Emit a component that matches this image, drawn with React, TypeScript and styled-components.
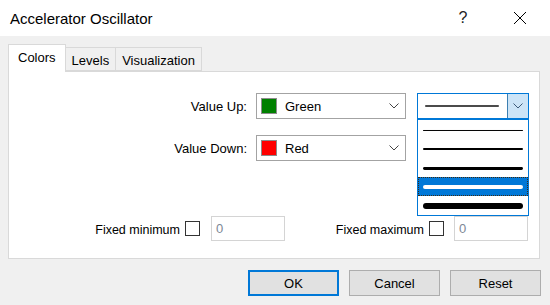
import React from "react";
import styled, { createGlobalStyle } from "styled-components";

const GlobalStyle = createGlobalStyle`
    body {
        margin: 0;
        background: #f0f0f0;
        font-family: "Liberation Sans", Arial, sans-serif;
        font-size: 13px;
        color: #000;
    }
`;

const Window = styled.div`
    width: 550px;
    height: 305px;
    display: flex;
    flex-direction: column;
    background: #f0f0f0;
    overflow: hidden;
`;

const TitleBar = styled.div`
    height: 36px;
    flex-shrink: 0;
    display: flex;
    align-items: center;
    background: #fff;
    padding-left: 10px;
    padding-right: 7px;
`;

const Title = styled.span`
    font-size: 15px;
    flex: 1;
`;

const CaptionButton = styled.div<{ $gap?: number }>`
    width: 46px;
    height: 36px;
    display: flex;
    align-items: center;
    justify-content: center;
    font-size: 16px;
    color: #222;
    margin-left: ${p => p.$gap || 0}px;
`;

const Body = styled.div`
    display: flex;
    flex-direction: column;
    padding: 8px 10px 0 8px;
`;

const TabStrip = styled.div`
    height: 27px;
    display: flex;
    align-items: flex-end;
`;

const Tab = styled.div<{ $active?: boolean }>`
    height: ${p => (p.$active ? 28 : 24)}px;
    box-sizing: border-box;
    padding: ${p => (p.$active ? "0 9px 3px" : "2px 6px 0")};
    display: flex;
    align-items: center;
    border: 1px solid #d9d9d9;
    border-bottom: ${p => (p.$active ? "none" : "1px solid #d9d9d9")};
    border-left: ${p => (p.$active ? "1px solid #d9d9d9" : "none")};
    background: ${p => (p.$active ? "#fff" : "#f0f0f0")};
    margin-bottom: ${p => (p.$active ? -1 : 0)}px;
    position: relative;
    z-index: ${p => (p.$active ? 2 : 1)};
`;

const Panel = styled.div`
    height: 188px;
    box-sizing: border-box;
    border: 1px solid #d9d9d9;
    background: #fff;
    padding-top: 21px;
    display: flex;
    flex-direction: column;
`;

const ValueRows = styled.div`
    display: flex;
    flex-direction: column;
    gap: 16px;
`;

const Row = styled.div`
    display: flex;
    align-items: center;
    height: 26px;
`;

const Label = styled.div`
    width: 238px;
    margin-right: 9px;
    text-align: right;
`;

const ColorCombo = styled.div`
    width: 150px;
    height: 26px;
    box-sizing: border-box;
    border: 1px solid #a3a3a3;
    display: flex;
    align-items: center;
    padding-left: 4px;
    padding-right: 6px;
`;

const Swatch = styled.div<{ $color: string }>`
    width: 16px;
    height: 16px;
    box-sizing: border-box;
    border: 1px solid #8c8c8c;
    background: ${p => p.$color};
`;

const ComboText = styled.span`
    margin-left: 8px;
    flex: 1;
`;

const LineComboWrap = styled.div`
    position: relative;
    margin-left: 11px;
`;

const LineCombo = styled.div`
    width: 112px;
    height: 26px;
    box-sizing: border-box;
    border: 1px solid #0078d7;
    display: flex;
    background: #fff;
`;

const LineArea = styled.div`
    flex: 1;
    display: flex;
    align-items: center;
    padding-left: 7px;
`;

const DropButton = styled.div`
    width: 20px;
    background: #cce4f7;
    border-left: 1px solid #3c7fb1;
    display: flex;
    align-items: center;
    justify-content: center;
`;

const DropList = styled.div`
    position: absolute;
    left: 0;
    top: 26px;
    width: 112px;
    box-sizing: border-box;
    border: 1px solid #0078d7;
    background: #fff;
    z-index: 5;
`;

const ListItem = styled.div<{ $selected?: boolean }>`
    height: 19px;
    box-sizing: border-box;
    display: flex;
    align-items: center;
    padding: 0 4px;
    background: ${p => (p.$selected ? "#0078d7" : "#fff")};
    border: 1px ${p => (p.$selected ? "dotted #3b2a12" : "solid transparent")};
`;

const FixedRow = styled.div`
    display: flex;
    align-items: center;
    height: 25px;
    margin-top: 55px;
`;

const FixedLabel = styled.div<{ $width: number }>`
    width: ${p => p.$width}px;
    text-align: right;
    font-size: 12.5px;
    padding-top: 2px;
`;

const CheckBox = styled.div`
    width: 15px;
    height: 15px;
    box-sizing: border-box;
    border: 1px solid #333;
    background: #fff;
    margin-left: 5px;
`;

const NumberInput = styled.div<{ $gap: number }>`
    width: 74px;
    height: 25px;
    box-sizing: border-box;
    border: 1px solid #d4d4d4;
    background: #fff;
    margin-left: ${p => p.$gap}px;
    display: flex;
    align-items: center;
    padding-left: 4px;
    color: #7d8896;
`;

const ButtonRow = styled.div`
    display: flex;
    justify-content: flex-end;
    gap: 10px;
    margin-top: 11px;
    margin-right: -1px;
`;

const Button = styled.div<{ $default?: boolean }>`
    width: 91px;
    height: 26px;
    box-sizing: border-box;
    display: flex;
    align-items: center;
    justify-content: center;
    background: #e1e1e1;
    border: 1px solid ${p => (p.$default ? "#0078d7" : "#adadad")};
    box-shadow: ${p => (p.$default ? "inset 0 0 0 1px #0078d7" : "none")};
`;

const Chevron = ({ color = "#444" }: { color?: string }) => (
    <svg width="10" height="6" viewBox="0 0 10 6">
        <polyline points="0.5,0.5 5,5 9.5,0.5" fill="none" stroke={color} strokeWidth="1" />
    </svg>
);

// odd stroke widths sit on a half pixel so the line stays crisp
const StrokeLine = ({ width, stroke, color }: { width: number; stroke: number; color: string }) => {
    const y = Math.round(stroke) % 2 === 1 ? 4.5 : 4;
    return (
        <svg width={width} height="8" viewBox={`0 0 ${width} 8`}>
            <line
                x1={stroke / 2}
                y1={y}
                x2={width - stroke / 2}
                y2={y}
                stroke={color}
                strokeWidth={stroke}
                strokeLinecap="round"
            />
        </svg>
    );
};

const lineWidths = [1, 2, 3, 4, 6];

export default function App() {
    return (
        <>
            <GlobalStyle />
            <Window>
                <TitleBar>
                    <Title>Accelerator Oscillator</Title>
                    <CaptionButton>?</CaptionButton>
                    <CaptionButton $gap={11}>
                        <svg width="14" height="14" viewBox="0 0 14 14">
                            <path d="M1 1 L13 13 M13 1 L1 13" stroke="#000" strokeWidth="1" />
                        </svg>
                    </CaptionButton>
                </TitleBar>
                <Body>
                    <TabStrip>
                        <Tab $active>Colors</Tab>
                        <Tab>Levels</Tab>
                        <Tab>Visualization</Tab>
                    </TabStrip>
                    <Panel>
                        <ValueRows>
                            <Row>
                                <Label>Value Up:</Label>
                                <ColorCombo>
                                    <Swatch $color="#008000" />
                                    <ComboText>Green</ComboText>
                                    <Chevron />
                                </ColorCombo>
                                <LineComboWrap>
                                    <LineCombo>
                                        <LineArea>
                                            <StrokeLine width={74} stroke={1.5} color="#111" />
                                        </LineArea>
                                        <DropButton>
                                            <Chevron color="#3d5a78" />
                                        </DropButton>
                                    </LineCombo>
                                    <DropList>
                                        {lineWidths.map((w, i) => (
                                            <ListItem key={w} $selected={i === 3}>
                                                <StrokeLine width={101} stroke={w} color={i === 3 ? "#fff" : "#000"} />
                                            </ListItem>
                                        ))}
                                    </DropList>
                                </LineComboWrap>
                            </Row>
                            <Row>
                                <Label>Value Down:</Label>
                                <ColorCombo>
                                    <Swatch $color="#ff0000" />
                                    <ComboText>Red</ComboText>
                                    <Chevron />
                                </ColorCombo>
                            </Row>
                        </ValueRows>
                        <FixedRow>
                            <FixedLabel $width={171}>Fixed minimum</FixedLabel>
                            <CheckBox />
                            <NumberInput $gap={11}>0</NumberInput>
                            <FixedLabel $width={139}>Fixed maximum</FixedLabel>
                            <CheckBox />
                            <NumberInput $gap={10}>0</NumberInput>
                        </FixedRow>
                    </Panel>
                    <ButtonRow>
                        <Button $default>OK</Button>
                        <Button>Cancel</Button>
                        <Button>Reset</Button>
                    </ButtonRow>
                </Body>
            </Window>
        </>
    );
}
